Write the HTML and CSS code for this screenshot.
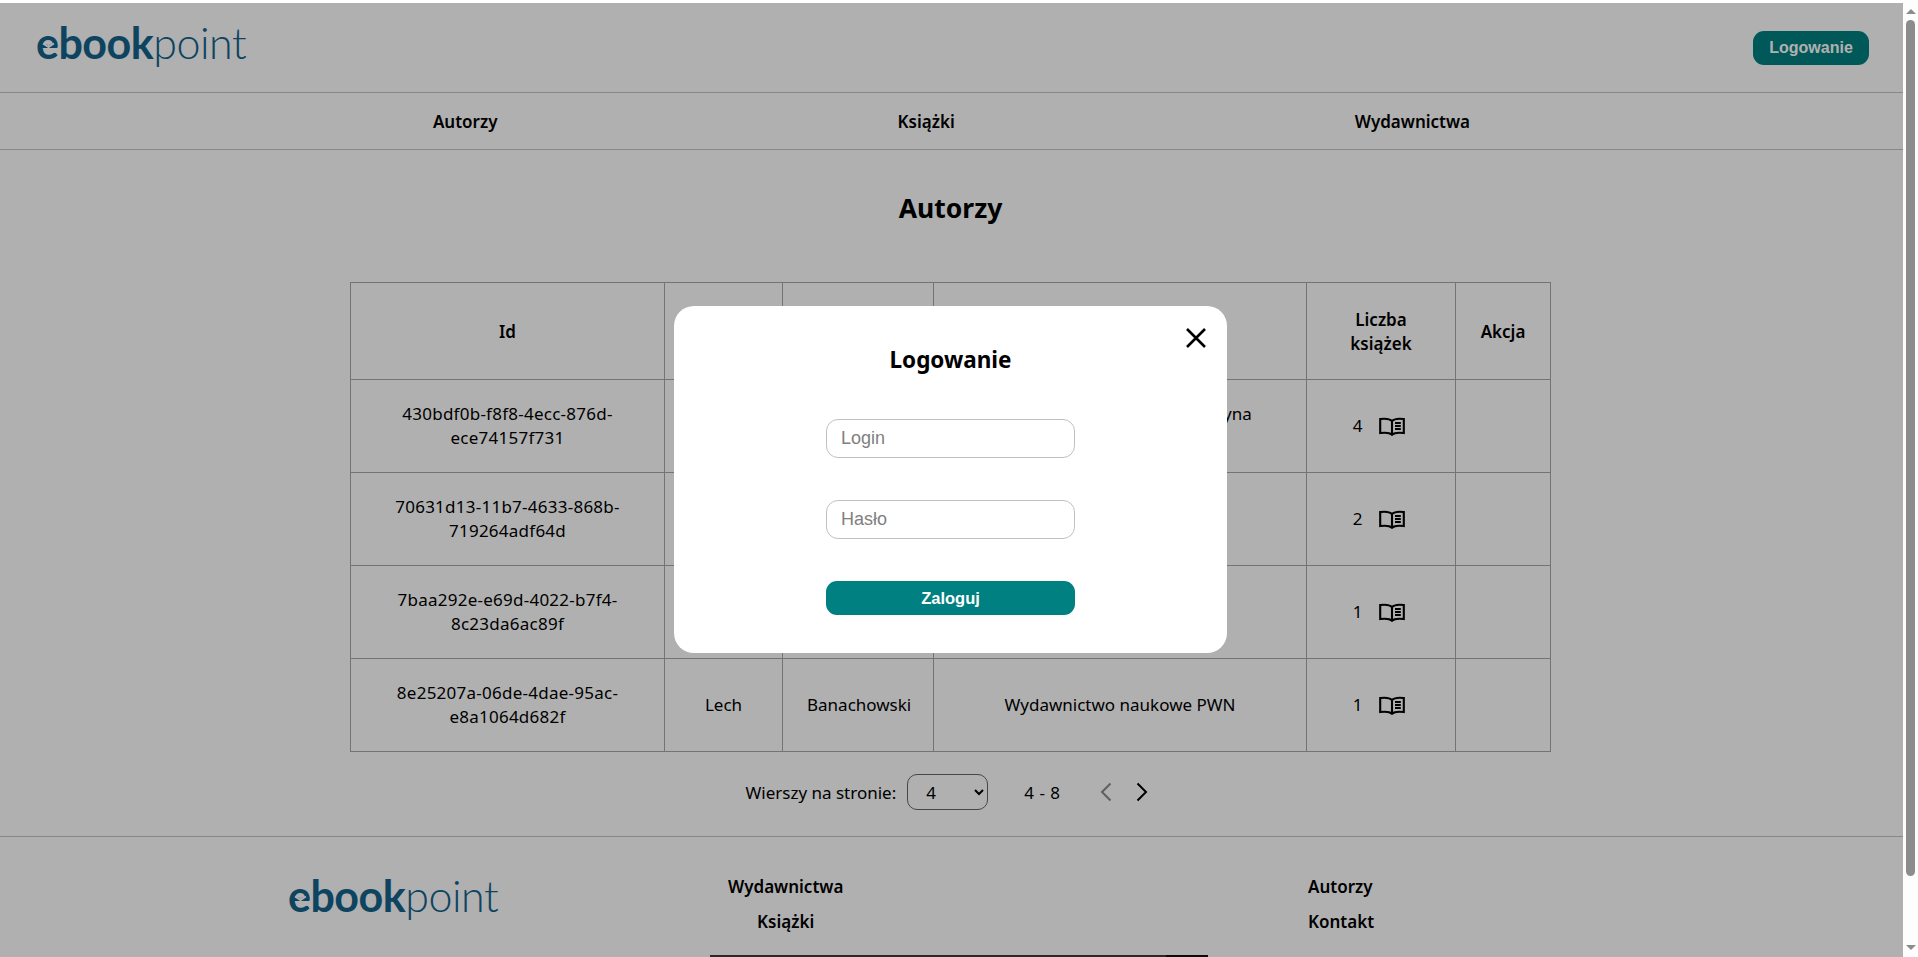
FILE: index.html
```html
<!DOCTYPE html>
<html lang="pl">
<head>
    <meta charset="UTF-8">
    <meta name="viewport" content="width=device-width, initial-scale=1.0">
    <title>ebookpoint - Autorzy</title>
    <link rel="stylesheet" href="styles.css">
</head>
<body>
    <div class="window">
        <div class="page">
            <header class="topbar">
                <a class="logo" href="#">
                    <span class="logo-bold">ebook</span><span class="logo-light">point</span>
                    <svg class="logo-mark" viewBox="0 0 14 10" aria-hidden="true"><path d="M1 4 L7 8 L13 4 M7 1 V8"/></svg>
                </a>
                <button class="login-btn">Logowanie</button>
            </header>

            <nav class="mainnav">
                <a href="#">Autorzy</a>
                <a href="#">Książki</a>
                <a href="#">Wydawnictwa</a>
            </nav>

            <main class="content">
                <h1>Autorzy</h1>
                <table class="authors">
                    <colgroup>
                        <col class="col-id">
                        <col class="col-name">
                        <col class="col-surname">
                        <col class="col-publisher">
                        <col class="col-count">
                        <col class="col-action">
                    </colgroup>
                    <thead>
                        <tr>
                            <th>Id</th>
                            <th>Imię</th>
                            <th>Nazwisko</th>
                            <th>Wydawnictwo</th>
                            <th>Liczba książek</th>
                            <th>Akcja</th>
                        </tr>
                    </thead>
                    <tbody>
                        <tr>
                            <td>430bdf0b-f8f8-4ecc-876d-ece74157f731</td>
                            <td></td>
                            <td></td>
                            <td>Wydawnictwo Naukowe i Oficyna Wydawnicza</td>
                            <td><div class="count">4 <svg class="book" viewBox="0 0 26 19"><use href="#book-icon"/></svg></div></td>
                            <td></td>
                        </tr>
                        <tr>
                            <td>70631d13-11b7-4633-868b-719264adf64d</td>
                            <td></td>
                            <td></td>
                            <td></td>
                            <td><div class="count">2 <svg class="book" viewBox="0 0 26 19"><use href="#book-icon"/></svg></div></td>
                            <td></td>
                        </tr>
                        <tr>
                            <td>7baa292e-e69d-4022-b7f4-8c23da6ac89f</td>
                            <td></td>
                            <td></td>
                            <td></td>
                            <td><div class="count">1 <svg class="book" viewBox="0 0 26 19"><use href="#book-icon"/></svg></div></td>
                            <td></td>
                        </tr>
                        <tr>
                            <td>8e25207a-06de-4dae-95ac-e8a1064d682f</td>
                            <td>Lech</td>
                            <td>Banachowski</td>
                            <td>Wydawnictwo naukowe PWN</td>
                            <td><div class="count">1 <svg class="book" viewBox="0 0 26 19"><use href="#book-icon"/></svg></div></td>
                            <td></td>
                        </tr>
                    </tbody>
                </table>

                <div class="pager">
                    <label for="rows">Wierszy na stronie:</label>
                    <select id="rows" class="pager-select">
                        <option>4</option>
                        <option>8</option>
                        <option>12</option>
                    </select>
                    <span class="pager-range">4 - 8</span>
                    <div class="pager-arrows">
                        <svg class="chevron chevron-off" viewBox="0 0 12 20"><path d="M10.500 1.500 L2 10 L10.500 18.500"/></svg>
                        <svg class="chevron" viewBox="0 0 12 20"><path d="M1.500 1.500 L10 10 L1.500 18.500"/></svg>
                    </div>
                </div>
            </main>

            <footer class="footer">
                <a class="logo" href="#">
                    <span class="logo-bold">ebook</span><span class="logo-light">point</span>
                    <svg class="logo-mark" viewBox="0 0 14 10" aria-hidden="true"><path d="M1 4 L7 8 L13 4 M7 1 V8"/></svg>
                </a>
                <div class="footer-col footer-col-center">
                    <a href="#">Wydawnictwa</a>
                    <a href="#">Książki</a>
                </div>
                <div class="footer-col">
                    <a href="#">Autorzy</a>
                    <a href="#">Kontakt</a>
                </div>
            </footer>
            <div class="footer-edge"><span></span></div>

            <div class="overlay">
                <form class="modal">
                    <button type="button" class="modal-close" aria-label="Zamknij">
                        <svg viewBox="0 0 20 20"><path d="M1 1 L19 19 M19 1 L1 19"/></svg>
                    </button>
                    <h2>Logowanie</h2>
                    <input type="text" placeholder="Login">
                    <input type="password" placeholder="Hasło">
                    <button type="button" class="submit-btn">Zaloguj</button>
                </form>
            </div>
        </div>

        <div class="scrollbar">
            <span class="arrow-up"></span>
            <span class="thumb"></span>
            <span class="arrow-down"></span>
        </div>
    </div>

    <svg class="icon-defs" aria-hidden="true">
        <symbol id="book-icon" viewBox="0 0 26 19">
            <path d="M13 4 C11 2 6.500 1.300 1.200 2 V16 C6.500 15.300 11 15.800 13 17.800 C15 15.800 19.500 15.300 24.800 16 V2 C19.500 1.300 15 2 13 4 Z M13 4 V17.500"/>
            <path d="M16 6 H21.800 M16 9 H21.800 M16 12 H21.800"/>
        </symbol>
    </svg>
</body>
</html>
```

FILE: styles.css
```css
* {
    box-sizing: border-box;
}

html, body {
    margin: 0;
    height: 100%;
    overflow: hidden;
}

body {
    font-family: "Noto Sans", Arial, sans-serif;
    font-size: 17px;
    color: #000;
    background: #fff;
}

a {
    color: inherit;
    text-decoration: none;
}

.icon-defs {
    display: none;
}

.window {
    display: flex;
    height: 957px;
}

.page {
    position: relative;
    flex: 1;
    min-width: 0;
    padding-top: 3px;
    overflow: hidden;
}

/* header */
.topbar {
    display: flex;
    align-items: center;
    justify-content: space-between;
    height: 90px;
    padding: 0 34px 9px 36px;
    border-bottom: 1px solid #c4c4c4;
}

.logo {
    position: relative;
    display: inline-block;
    font-family: Lato, sans-serif;
    font-size: 43px;
    line-height: 50px;
    letter-spacing: -0.5px;
    color: #14638c;
    white-space: nowrap;
}

.logo-bold {
    font-weight: 700;
}

.logo-light {
    font-weight: 300;
}

.logo-mark {
    position: absolute;
    left: 6px;
    top: 22px;
    width: 13px;
    height: 9px;
    fill: none;
    stroke: #fff;
    stroke-width: 2;
}

.login-btn {
    width: 116px;
    height: 34px;
    margin-top: 9px;
    border: 0;
    border-radius: 11px;
    background: #008080;
    color: #fff;
    font-family: "Liberation Sans", Arial, sans-serif;
    font-size: 16px;
    font-weight: 700;
}

.mainnav {
    display: flex;
    align-items: center;
    justify-content: center;
    gap: 400px;
    height: 57px;
    border-bottom: 1px solid #c4c4c4;
    font-weight: 600;
}

/* table */
.content {
    display: flex;
    flex-direction: column;
    align-items: center;
    height: 687px;
    padding-right: 2px;
    border-bottom: 1px solid #c4c4c4;
}

.content h1 {
    margin: 39px 0 0;
    height: 40px;
    font-size: 26.500px;
    line-height: 38px;
    font-weight: 700;
}

.authors {
    width: 1200px;
    margin-top: 53px;
    table-layout: fixed;
    border-collapse: collapse;
    text-align: center;
}

.col-id { width: 314px; }
.col-name { width: 118px; }
.col-surname { width: 151px; }
.col-publisher { width: 373px; }
.col-count { width: 149px; }
.col-action { width: 95px; }

.authors th,
.authors td {
    border: 1px solid #a8a8a8;
    padding: 0 24px;
    line-height: 24px;
}

.authors th {
    height: 97px;
    padding-top: 2px;
    font-weight: 600;
}

.authors td {
    height: 93px;
}

.authors td:first-child {
    letter-spacing: 0.25px;
}

.count {
    display: flex;
    align-items: center;
    justify-content: center;
    gap: 17px;
    padding-right: 4px;
}

.book {
    width: 26px;
    height: 19px;
    fill: none;
    stroke: #000;
    stroke-width: 2.100;
}

.pager {
    display: flex;
    align-items: center;
    margin-top: 22px;
    height: 36px;
    padding-right: 8px;
}

.pager-select {
    width: 81px;
    height: 36px;
    margin-left: 11px;
    padding-left: 14px;
    border: 1px solid #666;
    border-radius: 10px;
    background: transparent;
    font-family: inherit;
    font-size: 17px;
    color: #000;
}

.pager-range {
    margin-left: 36px;
    letter-spacing: 0.5px;
}

.pager-arrows {
    display: flex;
    align-items: center;
    gap: 24px;
    margin-left: 39px;
}

.chevron {
    width: 12px;
    height: 20px;
    fill: none;
    stroke: #000;
    stroke-width: 2;
}

.chevron-off {
    stroke: #8a8a8a;
}

/* footer */
.footer {
    display: grid;
    grid-template-columns: 440px 580px auto;
    height: 118px;
    padding: 38px 0 0 288px;
    font-weight: 600;
}

.footer .logo {
    margin-top: -4px;
    align-self: start;
}

.footer-col {
    display: flex;
    flex-direction: column;
    align-items: flex-start;
    gap: 12px;
    width: max-content;
}

.footer-col-center {
    align-items: center;
}

.footer-edge {
    position: absolute;
    left: 710px;
    bottom: 0;
    width: 498px;
    height: 2px;
    background: #3c3c3c;
}

.footer-edge span {
    display: block;
    width: 42px;
    height: 2px;
    margin-left: 456px;
    background: #111;
}

/* login modal */
.overlay {
    position: absolute;
    left: 0;
    right: 0;
    top: 3px;
    bottom: 0;
    display: flex;
    align-items: center;
    justify-content: center;
    padding: 0 2px 1px 0;
    background: rgba(0, 0, 0, 0.31);
}

.modal {
    position: relative;
    display: flex;
    flex-direction: column;
    align-items: center;
    width: 553px;
    height: 347px;
    padding-top: 35px;
    border-radius: 20px;
    background: #fff;
}

.modal h2 {
    margin: 0 0 40px;
    height: 38px;
    font-size: 22.500px;
    line-height: 38px;
    font-weight: 700;
}

.modal input {
    width: 249px;
    height: 39px;
    margin-bottom: 42px;
    padding: 0 14px;
    border: 1px solid #c0c0c0;
    border-radius: 12px;
    font-family: "Liberation Sans", Arial, sans-serif;
    font-size: 18px;
}

.modal input::placeholder {
    color: #808080;
}

.submit-btn {
    width: 249px;
    height: 34px;
    border: 0;
    border-radius: 11px;
    background: #008080;
    color: #fff;
    font-family: "Liberation Sans", Arial, sans-serif;
    font-size: 16.500px;
    font-weight: 700;
}

.modal-close {
    position: absolute;
    top: 22px;
    right: 21px;
    width: 20px;
    height: 20px;
    padding: 0;
    border: 0;
    background: none;
}

.modal-close svg {
    display: block;
    fill: none;
    stroke: #000;
    stroke-width: 2.600;
}

/* window scrollbar */
.scrollbar {
    display: flex;
    flex-direction: column;
    align-items: center;
    width: 15px;
    padding: 9px 0 7px;
    background: #fdfdfd;
}

.thumb {
    width: 9px;
    flex: 1;
    margin: 6px 0 69px;
    border-radius: 5px;
    background: #8c8c8c;
}

.arrow-up,
.arrow-down {
    width: 0;
    height: 0;
    border-left: 5px solid transparent;
    border-right: 5px solid transparent;
}

.arrow-up {
    border-bottom: 5px solid #8c8c8c;
}

.arrow-down {
    border-top: 5px solid #8c8c8c;
}
```
